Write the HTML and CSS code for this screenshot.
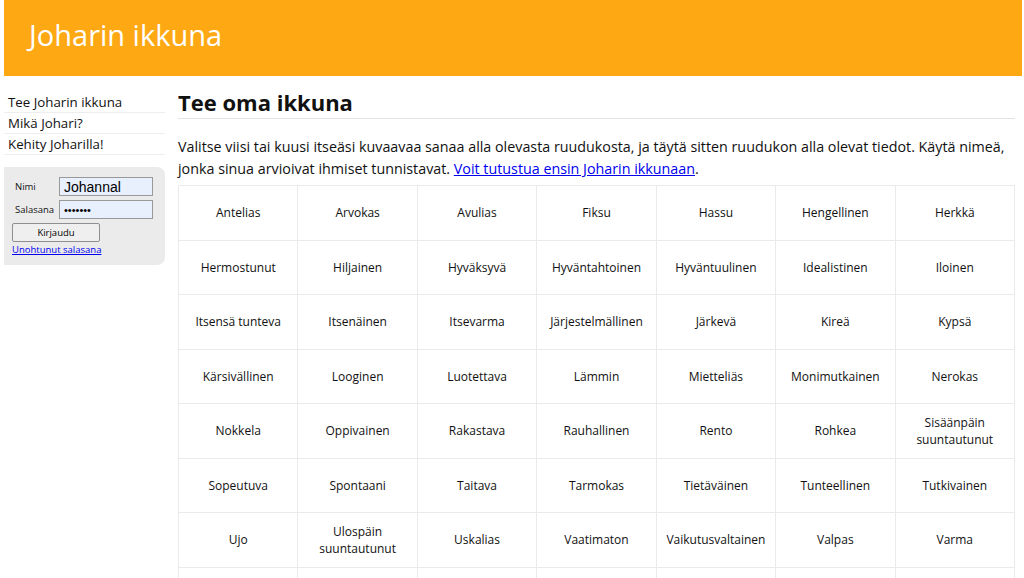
FILE: index.html
```html
<!DOCTYPE html>
<html>
<head>
    <meta charset="utf-8">
    <meta name="viewport" content="width=device-width, initial-scale=1">
    <title>Joharin ikkuna</title>
    <link rel="stylesheet" href="styles.css">
</head>
<body>
    <div class="page">
        <header class="header">
            <h1 class="site-title">Joharin ikkuna</h1>
        </header>

        <div class="layout">
            <aside class="sidebar">
                <nav class="menu">
                    <a href="#">Tee Joharin ikkuna</a>
                    <a href="#">Mikä Johari?</a>
                    <a href="#">Kehity Joharilla!</a>
                </nav>

                <form class="login">
                    <div class="login-row">
                        <label for="nimi">Nimi</label>
                        <input type="text" id="nimi" value="Johannal">
                    </div>
                    <div class="login-row">
                        <label for="salasana">Salasana</label>
                        <input type="password" id="salasana" value="1234567">
                    </div>
                    <button type="button">Kirjaudu</button>
                    <a class="forgot" href="#">Unohtunut salasana</a>
                </form>
            </aside>

            <main class="content">
                <h2>Tee oma ikkuna</h2>
                <p class="intro">Valitse viisi tai kuusi itseäsi kuvaavaa sanaa alla olevasta ruudukosta, ja täytä sitten ruudukon alla olevat tiedot. Käytä nimeä, jonka sinua arvioivat ihmiset tunnistavat. <a href="#">Voit tutustua ensin Joharin ikkunaan</a>.</p>

                <table class="words">
                    <tr><td>Antelias</td><td>Arvokas</td><td>Avulias</td><td>Fiksu</td><td>Hassu</td><td>Hengellinen</td><td>Herkkä</td></tr>
                    <tr><td>Hermostunut</td><td>Hiljainen</td><td>Hyväksyvä</td><td>Hyväntahtoinen</td><td>Hyväntuulinen</td><td>Idealistinen</td><td>Iloinen</td></tr>
                    <tr><td>Itsensä tunteva</td><td>Itsenäinen</td><td>Itsevarma</td><td>Järjestelmällinen</td><td>Järkevä</td><td>Kireä</td><td>Kypsä</td></tr>
                    <tr><td>Kärsivällinen</td><td>Looginen</td><td>Luotettava</td><td>Lämmin</td><td>Mietteliäs</td><td>Monimutkainen</td><td>Nerokas</td></tr>
                    <tr><td>Nokkela</td><td>Oppivainen</td><td>Rakastava</td><td>Rauhallinen</td><td>Rento</td><td>Rohkea</td><td>Sisäänpäin<br>suuntautunut</td></tr>
                    <tr><td>Sopeutuva</td><td>Spontaani</td><td>Taitava</td><td>Tarmokas</td><td>Tietäväinen</td><td>Tunteellinen</td><td>Tutkivainen</td></tr>
                    <tr><td>Ujo</td><td>Ulospäin<br>suuntautunut</td><td>Uskalias</td><td>Vaatimaton</td><td>Vaikutusvaltainen</td><td>Valpas</td><td>Varma</td></tr>
                    <tr><td>Välittävä</td><td>Ystävällinen</td><td>Älykäs</td><td>Ärsyyntyvä</td><td>Energinen</td><td>Hellä</td><td>Huolellinen</td></tr>
                </table>
            </main>
        </div>
    </div>
</body>
</html>
```

FILE: styles.css
```css
body {
    font-family: "Open Sans", "Noto Sans", sans-serif;
    margin: 0;
    color: #111;
    background: white;
}

.page {
    margin: 0 2px 0 4px;
}

.header {
    background: #fea814;
    height: 76px;
    padding: 0 25px;
    box-sizing: border-box;
}

.site-title {
    margin: 0;
    padding-top: 15px;
    color: white;
    font-weight: 400;
    font-size: 29px;
    line-height: 40px;
}

.layout {
    display: flex;
    gap: 13px;
    margin-top: 11px;
}

.sidebar {
    width: 161px;
    flex-shrink: 0;
    padding-top: 5px;
}

.menu a {
    display: block;
    padding: 0 4px;
    height: 20px;
    line-height: 21px;
    border-bottom: 1px solid #eee;
    color: #111;
    text-decoration: none;
    font-size: 13.3px;
}

.login {
    margin-top: 12px;
    background: #ebebeb;
    border-radius: 0 8px 8px 0;
    padding: 10px 12px 9px 8px;
}

.login-row {
    display: flex;
    align-items: center;
    margin-bottom: 4px;
}

.login label {
    width: 47px;
    padding-left: 3px;
    font-size: 9.5px;
}

.login input {
    width: 94px;
    height: 19px;
    box-sizing: border-box;
    border: 1px solid #999;
    background: #e8f0fe;
    padding: 0 4px;
    font-family: "Liberation Sans", Arial, sans-serif;
    font-size: 14px;
}

.login input[type=password] {
    font-size: 11px;
}

.login button {
    display: block;
    margin: 0;
    width: 88px;
    height: 19px;
    background: #efefef;
    border: 1px solid #8f8f8f;
    border-radius: 2px;
    font-family: "Open Sans", sans-serif;
    font-size: 9.5px;
    padding: 0;
}

.forgot {
    display: block;
    margin: 1px 0 0 0;
    font-size: 9.5px;
    color: #0000ee;
}

.content {
    flex: 1;
    margin-right: 7px;
}

.content h2 {
    margin: 0;
    font-size: 22px;
    font-weight: 700;
    line-height: 30px;
    padding-bottom: 1px;
    border-bottom: 1px solid #e4e4e4;
}

.intro {
    margin: 17px 0 5px 0;
    font-size: 14.3px;
    line-height: 22px;
}

.intro a {
    color: #0000ee;
}

.words {
    width: 100%;
    border-collapse: collapse;
    table-layout: fixed;
}

.words td {
    border: 1px solid #eaeaea;
    height: 54.5px;
    padding: 0 4px;
    text-align: center;
    font-size: 12px;
    line-height: 17px;
    box-sizing: border-box;
}
```
